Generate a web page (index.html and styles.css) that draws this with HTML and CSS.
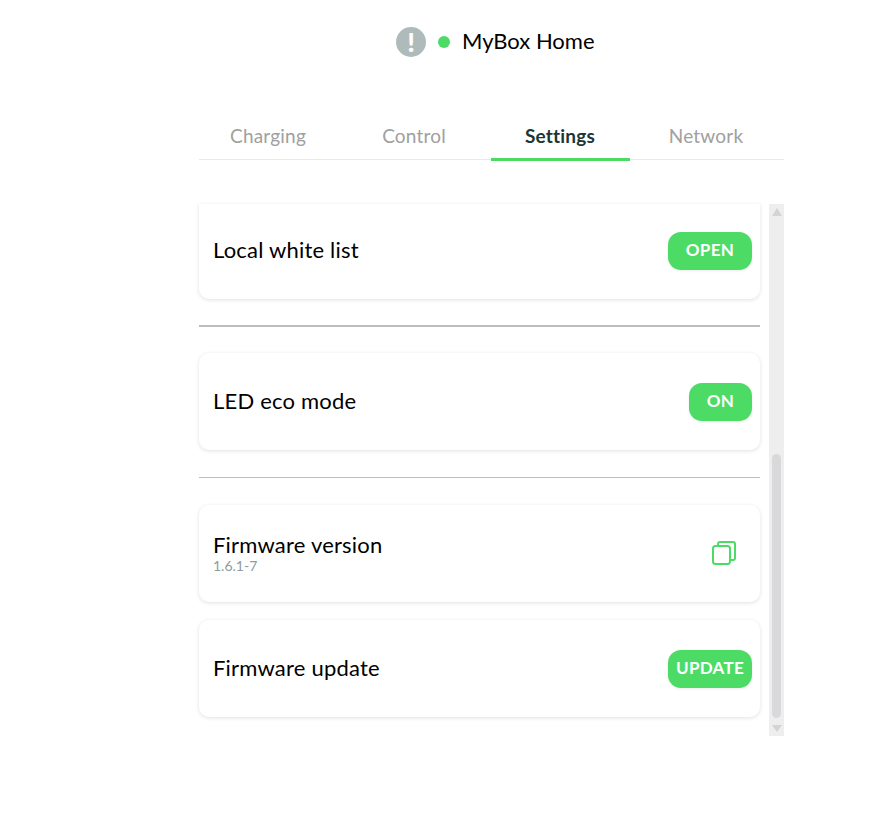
FILE: index.html
```html
<!DOCTYPE html>
<html lang="en">
<head>
	<meta charset="UTF-8">
	<title>MyBox Home</title>
	<link rel="stylesheet" href="styles.css">
</head>
<body>
<div class="page">
	<div class="head">
		<span class="alert">!</span>
		<span class="dot"></span>
		<span class="name">MyBox Home</span>
	</div>
	<ul class="tabs">
		<li>Charging</li>
		<li>Control</li>
		<li class="active">Settings</li>
		<li>Network</li>
	</ul>
	<div class="panel">
		<div class="list">
			<div class="card first">
				<div class="label">Local white list</div>
				<button class="btn">OPEN</button>
			</div>
			<div class="line thick"></div>
			<div class="card">
				<div class="label">LED eco mode</div>
				<button class="btn">ON</button>
			</div>
			<div class="line low"></div>
			<div class="card">
				<div class="info">
					<div class="label">Firmware version</div>
					<div class="sub">1.6.1-7</div>
				</div>
				<svg class="copy" width="24" height="24" viewBox="0 0 24 24" fill="none" stroke="#4cdc66" stroke-width="2">
					<path d="M6 4V3a2 2 0 0 1 2-2h13a2 2 0 0 1 2 2v14a2 2 0 0 1-2 2h-2"/>
					<rect x="1" y="5" width="17" height="18" rx="2.5"/>
				</svg>
			</div>
			<div class="card last">
				<div class="label">Firmware update</div>
				<button class="btn">UPDATE</button>
			</div>
		</div>
		<div class="bar">
			<span class="up"></span>
			<div class="thumb"></div>
			<span class="down"></span>
		</div>
	</div>
</div>
</body>
</html>
```

FILE: styles.css
```css
*{
	box-sizing: border-box;
}
body{
	margin: 0;
	background: #fff;
	font-family: "Lato", "Liberation Sans", sans-serif;
	color: #000;
}
.page{
	width: 585px;
	margin-left: 199px;
}
.head{
	display: flex;
	align-items: center;
	height: 84px;
	padding: 0 0 0 197px;
}
.alert{
	width: 30px;
	height: 30px;
	border-radius: 50%;
	background: #afbbbb;
	color: #fff;
	font-size: 27px;
	font-weight: 900;
	line-height: 29px;
	text-align: center;
}
.dot{
	width: 12px;
	height: 12px;
	margin-left: 12px;
	border-radius: 50%;
	background: #4cdc66;
}
.name{
	margin-left: 12px;
	margin-bottom: 3px;
	font-size: 22px;
}
.tabs{
	display: flex;
	list-style: none;
	margin: 0;
	padding: 30px 0 0;
	height: 76px;
	border-bottom: 1px solid #e8e8e8;
}
.tabs li{
	width: 139px;
	height: 46px;
	margin-right: 7px;
	padding: 10px 1px 0 0;
	text-align: center;
	font-size: 19px;
	letter-spacing: 0.2px;
	color: #a0a0a0;
}
.tabs .active{
	height: 47px;
	color: #1d3535;
	font-weight: 700;
	border-bottom: 3px solid #4cdc66;
}
.panel{
	display: flex;
	justify-content: space-between;
	margin-top: 44px;
	height: 532px;
}
.list{
	width: 561px;
}
.card{
	display: flex;
	align-items: center;
	justify-content: space-between;
	height: 97px;
	padding: 0 8px 0 14px;
	background: #fff;
	border-radius: 10px;
	box-shadow: 0 1px 4px rgba(0,0,0,0.12);
}
.first{
	height: 95px;
	padding-bottom: 2px;
	border-radius: 0 0 10px 10px;
}
.last{
	margin-top: 18px;
}
.label{
	margin-bottom: 1px;
	font-size: 22px;
	letter-spacing: 0.2px;
	line-height: 26px;
}
.info{
	margin-bottom: 2px;
}
.info .label{
	margin-bottom: 0;
}
.sub{
	font-size: 14px;
	line-height: 16px;
	color: #8f9c9c;
}
.btn{
	height: 38px;
	min-width: 63px;
	padding: 0 7px 2px;
	border: none;
	border-radius: 13px;
	background: #4cdc66;
	color: #fff;
	font-family: inherit;
	font-size: 17px;
	font-weight: 700;
	letter-spacing: 0.3px;
	box-shadow: 0 1px 3px rgba(0,0,0,0.08);
}
.first .btn, .last .btn{
	min-width: 84px;
}
.copy{
	margin-right: 16px;
	margin-bottom: 1px;
}
.line{
	height: 1px;
	margin: 26px 0 27px;
	background: #bdbdbd;
}
.thick{
	height: 2px;
	margin-bottom: 26px;
}
.low{
	margin-top: 27px;
}
.bar{
	display: flex;
	flex-direction: column;
	align-items: center;
	width: 15px;
	background: #eeeeee;
}
.up, .down{
	width: 0;
	height: 0;
	border-left: 5.5px solid transparent;
	border-right: 5.5px solid transparent;
}
.up{
	margin-top: 4px;
	border-bottom: 8px solid #d4d4d7;
}
.thumb{
	width: 9px;
	height: 264px;
	margin-top: 238px;
	border-radius: 5px;
	background: #d9d9dc;
}
.down{
	margin-top: 7px;
	border-top: 7px solid #d4d4d7;
}
```
